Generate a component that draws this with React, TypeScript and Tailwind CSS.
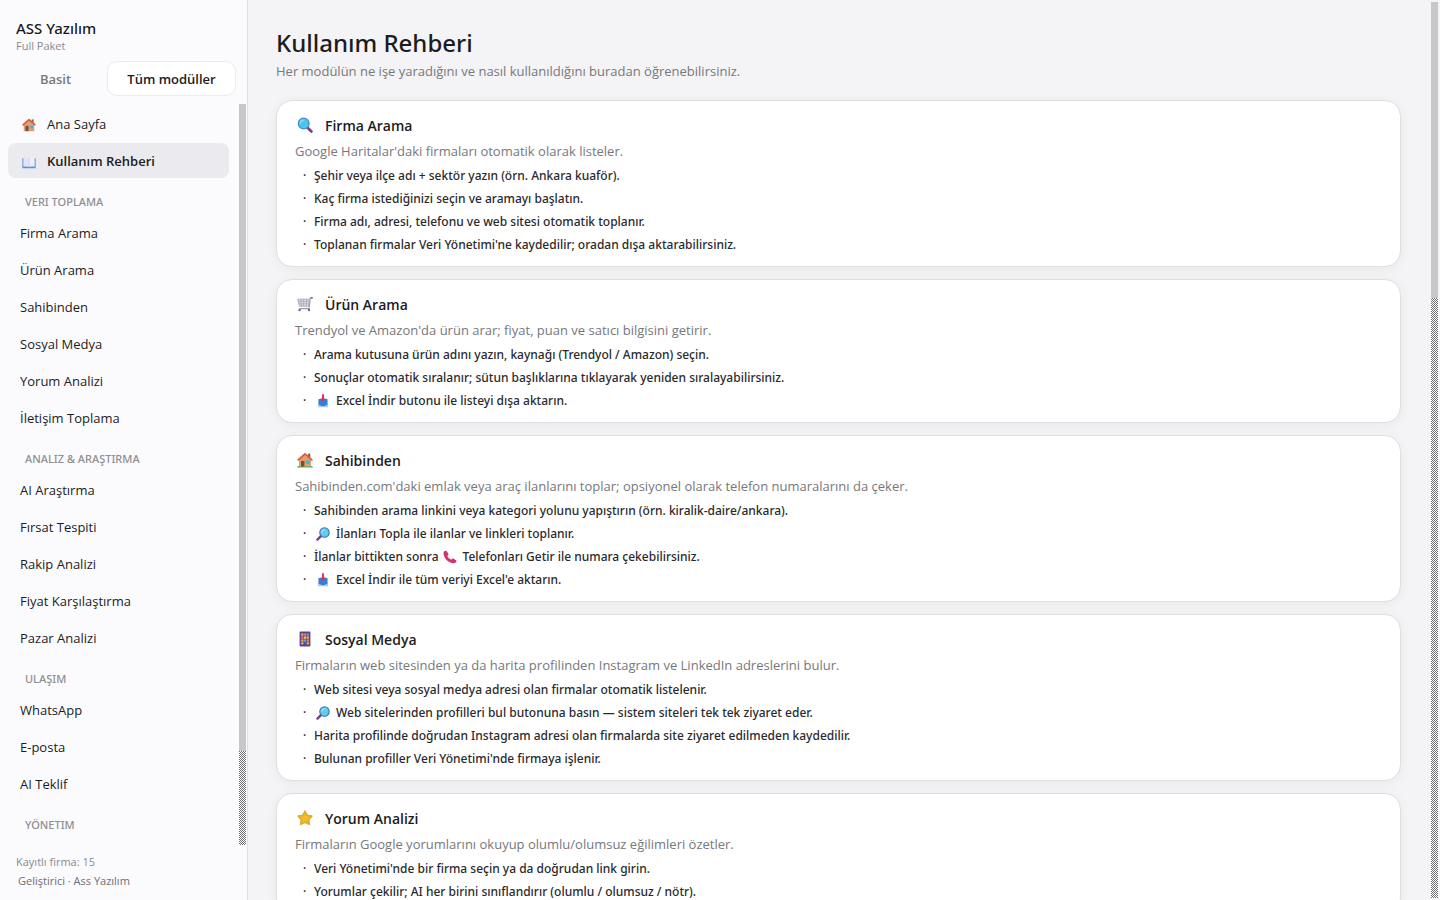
import React, { useState } from 'react';
import clsx from 'clsx';

type IconName = 'search' | 'searchRight' | 'cart' | 'house' | 'garden' | 'phone' | 'star' | 'inbox' | 'call' | 'book';

function Icon({ name, className }: { name: IconName; className?: string }) {
  return (
    <svg viewBox="0 0 16 16" className={clsx('shrink-0', className)} aria-hidden="true">
      {name === 'search' && (
        <>
          <path d="M10.6 10.8l3.8 3.6" stroke="#7b3f86" strokeWidth="2.8" strokeLinecap="round" />
          <circle cx="6.7" cy="6.5" r="5.4" fill="#4fc3ea" stroke="#3a8fd0" strokeWidth="1.2" />
          <path d="M3.4 6.2a3.4 3.4 0 0 1 3-3" stroke="#8be0f8" strokeWidth="1.2" fill="none" strokeLinecap="round" />
        </>
      )}
      {name === 'searchRight' && (
        <>
          <path d="M5.6 10.4l-3.9 3.9" stroke="#7b3f86" strokeWidth="2.8" strokeLinecap="round" />
          <circle cx="9.7" cy="6.3" r="5.4" fill="#5fcdee" stroke="#3f6fae" strokeWidth="1.2" />
          <path d="M6.6 6a3.4 3.4 0 0 1 3-3" stroke="#9be6f8" strokeWidth="1.2" fill="none" strokeLinecap="round" />
        </>
      )}
      {name === 'cart' && (
        <>
          <path d="M.8 3.2h11.6l-.8 7H2.4z" fill="#e6e3ec" stroke="#a8a3b4" strokeWidth="0.9" />
          <path d="M3.8 3.2l.6 7M6.7 3.2v7M9.6 3.2l-.3 7M1.2 5.4h11M1.8 7.8h10" stroke="#a8a3b4" strokeWidth="0.8" />
          <path d="M15 1.8h-1.6L12 12.6H2.6" stroke="#9d98ab" strokeWidth="1.1" fill="none" />
          <path d="M13.6 1h2.2v1.6h-2.2z" fill="#3f7fd0" />
          <circle cx="2.6" cy="14" r="1.2" fill="#3f6fc0" />
          <circle cx="12" cy="14" r="1.2" fill="#3f6fc0" />
        </>
      )}
      {(name === 'house' || name === 'garden') && (
        <>
          <path d="M11 1.6h2.3v4H11z" fill="#9b5b49" />
          <path d="M2 7.2L8 2.2l6 5V15H2z" fill="#dfa06f" />
          <path d="M4 9h3.4v6H4z" fill="#7e4a3e" />
          <path d="M9.3 8.6h3.2v3.2H9.3z" fill="#35b4ec" />
          <path d="M1.2 7.8L8 1.8l6.8 6" stroke="#df5a3c" strokeWidth="1.8" fill="none" strokeLinejoin="round" strokeLinecap="round" />
          {name === 'garden' && <path d="M0 15.6c0-1.6 2-2 3-1.1h10c1-.9 3-.5 3 1.1z" fill="#3fb56a" />}
        </>
      )}
      {name === 'phone' && (
        <>
          <rect x="2.6" y="0.4" width="10.8" height="15.2" rx="1" fill="#57448c" />
          <path d="M4 2h8v11.4H4z" fill="#6d4a8e" />
          <path d="M4.2 2.6h2.2v2.2H4.2zM9.8 5.6H12v2.2H9.8zM4.2 8.6h2.2v2.2H4.2z" fill="#f5a73b" />
          <path d="M7 2.6h2.2v2.2H7zM4.2 5.6h2.2v2.2H4.2zM9.8 8.6H12v2.2H9.8z" fill="#ee7a45" />
          <path d="M9.8 2.6H12v2.2H9.8zM7 8.6h2.2v2.2H7z" fill="#3fa9e8" />
          <path d="M7 5.6h2.2v2.2H7zM4.2 11.6h2.2v1.6H4.2zM9.8 11.6H12v1.6H9.8z" fill="#f0c64b" />
        </>
      )}
      {name === 'star' && (
        <path
          d="M8 1.3l2.1 4 4.6.8-3.2 3.5.7 4.6L8 12.3l-4.2 1.9.7-4.6L1.3 6.1l4.6-.8z"
          fill="#efbf2c"
          stroke="#dfac2c"
          strokeWidth="1.8"
          strokeLinejoin="round"
        />
      )}
      {name === 'inbox' && (
        <>
          <path d="M2.2 6.4h11.6V15H2.2z" fill="#d3d0e6" />
          <path d="M3 5.8h10v6.4l-1.4 1.4H4.4L3 12.2z" fill="#2f80d8" />
          <path d="M2.2 12.6h2.6l.8 1h4.8l.8-1h2.6V15H2.2z" fill="#b4c6e6" />
          <path d="M6.9.4h2.2v4.8h2.1L8 9 4.8 5.2h2.1z" fill="#d8325c" />
        </>
      )}
      {name === 'call' && (
        <path
          d="M.6 3.2C.8 1.4 2.6.2 4 1l2.2 3.4c.4 1-.8 1.8-1.2 2.4.8 1.8 2.6 3.4 4.4 4.2.6-.6 1.5-1.6 2.4-1.2l3.4 2.2c.6 1.4-1 3-2.8 3.2C6.6 15.4.2 9.2.6 3.2z"
          fill="#d8326a"
        />
      )}
      {name === 'book' && (
        <>
          <path d="M.4 3.6h1.4V13h12.4V3.6h1.4v11.6H.4z" fill="#5596dc" />
          <path d="M1.8 2.2C4 1.6 6.6 1.8 8 2.8v10.6c-1.6-.8-4-.9-6.2-.4z" fill="#e6e3f4" />
          <path d="M14.2 2.2C12 1.6 9.4 1.8 8 2.8v10.6c1.6-.8 4-.9 6.2-.4z" fill="#efecf8" />
          <path d="M8 2.8v10.6" stroke="#cfc9e6" strokeWidth="0.8" />
        </>
      )}
    </svg>
  );
}

const sections = [
  {
    title: 'VERI TOPLAMA',
    items: ['Firma Arama', 'Ürün Arama', 'Sahibinden', 'Sosyal Medya', 'Yorum Analizi', 'İletişim Toplama'],
  },
  {
    title: 'ANALIZ & ARAŞTIRMA',
    items: ['AI Araştırma', 'Fırsat Tespiti', 'Rakip Analizi', 'Fiyat Karşılaştırma', 'Pazar Analizi'],
  },
  { title: 'ULAŞIM', items: ['WhatsApp', 'E-posta', 'AI Teklif'] },
  { title: 'YÖNETIM', items: [] },
];

interface Step {
  before?: string;
  icon?: IconName;
  text: string;
}

interface Guide {
  icon: IconName;
  title: string;
  desc: string;
  steps: Step[];
}

const guides: Guide[] = [
  {
    icon: 'search',
    title: 'Firma Arama',
    desc: "Google Haritalar'daki firmaları otomatik olarak listeler.",
    steps: [
      { text: 'Şehir veya ilçe adı + sektör yazın (örn. Ankara kuaför).' },
      { text: 'Kaç firma istediğinizi seçin ve aramayı başlatın.' },
      { text: 'Firma adı, adresi, telefonu ve web sitesi otomatik toplanır.' },
      { text: "Toplanan firmalar Veri Yönetimi'ne kaydedilir; oradan dışa aktarabilirsiniz." },
    ],
  },
  {
    icon: 'cart',
    title: 'Ürün Arama',
    desc: "Trendyol ve Amazon'da ürün arar; fiyat, puan ve satıcı bilgisini getirir.",
    steps: [
      { text: 'Arama kutusuna ürün adını yazın, kaynağı (Trendyol / Amazon) seçin.' },
      { text: 'Sonuçlar otomatik sıralanır; sütun başlıklarına tıklayarak yeniden sıralayabilirsiniz.' },
      { icon: 'inbox', text: 'Excel İndir butonu ile listeyi dışa aktarın.' },
    ],
  },
  {
    icon: 'garden',
    title: 'Sahibinden',
    desc: "Sahibinden.com'daki emlak veya araç ilanlarını toplar; opsiyonel olarak telefon numaralarını da çeker.",
    steps: [
      { text: 'Sahibinden arama linkini veya kategori yolunu yapıştırın (örn. kiralik-daire/ankara).' },
      { icon: 'searchRight', text: 'İlanları Topla ile ilanlar ve linkleri toplanır.' },
      { before: 'İlanlar bittikten sonra', icon: 'call', text: 'Telefonları Getir ile numara çekebilirsiniz.' },
      { icon: 'inbox', text: "Excel İndir ile tüm veriyi Excel'e aktarın." },
    ],
  },
  {
    icon: 'phone',
    title: 'Sosyal Medya',
    desc: 'Firmaların web sitesinden ya da harita profilinden Instagram ve LinkedIn adreslerini bulur.',
    steps: [
      { text: 'Web sitesi veya sosyal medya adresi olan firmalar otomatik listelenir.' },
      { icon: 'searchRight', text: 'Web sitelerinden profilleri bul butonuna basın — sistem siteleri tek tek ziyaret eder.' },
      { text: 'Harita profilinde doğrudan Instagram adresi olan firmalarda site ziyaret edilmeden kaydedilir.' },
      { text: "Bulunan profiller Veri Yönetimi'nde firmaya işlenir." },
    ],
  },
  {
    icon: 'star',
    title: 'Yorum Analizi',
    desc: 'Firmaların Google yorumlarını okuyup olumlu/olumsuz eğilimleri özetler.',
    steps: [
      { text: "Veri Yönetimi'nde bir firma seçin ya da doğrudan link girin." },
      { text: 'Yorumlar çekilir; AI her birini sınıflandırır (olumlu / olumsuz / nötr).' },
    ],
  },
];

// Solid thumb on a dithered track
function ScrollTrack({ thumb, className }: { thumb: string; className?: string }) {
  return (
    <div
      className={clsx(
        'w-[7px] shrink-0 bg-[conic-gradient(#6f6f6f_25%,#fcfcfc_0_50%,#6f6f6f_0_75%,#fcfcfc_0)] bg-[length:2px_2px]',
        className,
      )}
    >
      <div className="w-full bg-[#c7c6cb]" style={{ height: thumb }} />
    </div>
  );
}

function GuideCard({ guide }: { guide: Guide }) {
  return (
    <section className="rounded-2xl border border-[#dfdfe2] bg-white px-[18px] pt-3 pb-[10px] shadow-[0_2px_12px_rgba(0,0,0,0.05)]">
      <h2 className="flex h-6 items-center gap-3 pl-0.5 text-[14px] font-semibold">
        <Icon name={guide.icon} className="size-4" />
        {guide.title}
      </h2>
      <p className="mt-1 text-[13px] leading-5 text-[#77777c]">{guide.desc}</p>
      <ul className="mt-[3px] pl-2 font-['Noto_Sans','Open_Sans',sans-serif] text-[12px] leading-[23px] font-medium text-[#2a2a2d]">
        {guide.steps.map((s) => (
          <li key={s.text} className="flex items-center">
            <span className="w-[11px]">·</span>
            {s.before && <span className="mr-0.5">{s.before}</span>}
            {s.icon && <Icon name={s.icon} className="mr-1.5 ml-0.5 size-3.5" />}
            <span>{s.text}</span>
          </li>
        ))}
      </ul>
    </section>
  );
}

export default function App() {
  const [mode, setMode] = useState('all');
  const [page, setPage] = useState('Kullanım Rehberi');

  const home: { label: string; icon: IconName }[] = [
    { label: 'Ana Sayfa', icon: 'house' },
    { label: 'Kullanım Rehberi', icon: 'book' },
  ];

  return (
    <div className="flex h-screen overflow-hidden bg-[#f4f4f6] font-['Open_Sans','Noto_Sans',sans-serif] text-[#1c1c1e]">
      {/* Sidebar */}
      <aside className="flex w-[248px] shrink-0 flex-col border-r border-[#e0e0e3] bg-[#fbfbfd]">
        <div className="px-4 pt-[18px]">
          <div className="font-['Noto_Sans','Open_Sans',sans-serif] text-[15px] leading-5 font-medium">ASS Yazılım</div>
          <div className="text-[11px] leading-4 text-[#8a8a8f]">Full Paket</div>
        </div>

        <div className="mt-[7px] mr-[11px] ml-2 flex gap-1">
          <button
            onClick={() => setMode('simple')}
            className={clsx(
              'h-[35px] flex-1 rounded-[10px] border pt-0.5 text-[13px] font-semibold',
              mode === 'simple' ? 'border-[#ececf0] bg-white' : 'border-transparent text-[#77777c]',
            )}
          >
            Basit
          </button>
          <button
            onClick={() => setMode('all')}
            className={clsx(
              'h-[35px] w-[129px] rounded-[10px] border pt-0.5 text-[13px] font-semibold',
              mode === 'all' ? 'border-[#ececf0] bg-white' : 'border-transparent text-[#77777c]',
            )}
          >
            Tüm modüller
          </button>
        </div>

        <div className="mt-2 flex min-h-0 flex-1 pr-px">
          <nav className="flex-1 overflow-hidden pt-0.5 pr-[10px] pl-2 text-[13px]">
            {home.map((h) => (
              <button
                key={h.label}
                onClick={() => setPage(h.label)}
                className={clsx(
                  'mb-0.5 flex h-[35px] w-full items-center gap-[11px] rounded-lg pt-0.5 pl-3.5 text-left',
                  page === h.label && 'bg-[#ebebef] font-semibold',
                )}
              >
                <Icon name={h.icon} className="size-3.5" />
                {h.label}
              </button>
            ))}
            {sections.map((s) => (
              <div key={s.title}>
                <div className="h-[35px] pt-2.5 pl-[17px] font-['Noto_Sans','Open_Sans',sans-serif] text-[11px] leading-6 font-medium text-[#8e8e93]">
                  {s.title}
                </div>
                {s.items.map((item) => (
                  <button
                    key={item}
                    onClick={() => setPage(item)}
                    className={clsx(
                      'mb-0.5 flex h-[35px] w-full items-center rounded-lg pt-0.5 pl-3 text-left',
                      page === item && 'bg-[#ebebef] font-semibold',
                    )}
                  >
                    {item}
                  </button>
                ))}
              </div>
            ))}
          </nav>
          <ScrollTrack thumb="87.3%" />
        </div>

        <div className="px-4 pt-[7px] pb-[10px] text-[11px]">
          <div className="leading-[19px] text-[#8a8a8f]">Kayıtlı firma: 15</div>
          <div className="pl-0.5 leading-[19px] text-[#6e6e73]">Geliştirici · Ass Yazılım</div>
        </div>
      </aside>

      {/* Guide */}
      <main className="flex min-w-0 flex-1 pr-0.5">
        <div className="flex-1 overflow-hidden pt-[23px] pr-[30px] pl-7">
          <h1 className="font-['Noto_Sans','Open_Sans',sans-serif] text-[24px] leading-10 font-medium">
            Kullanım Rehberi
          </h1>
          <p className="-mt-0.5 text-[13px] leading-5 text-[#77777c]">
            Her modülün ne işe yaradığını ve nasıl kullanıldığını buradan öğrenebilirsiniz.
          </p>
          <div className="mt-[19px] flex flex-col gap-3">
            {guides.map((g) => (
              <GuideCard key={g.title} guide={g} />
            ))}
          </div>
        </div>
        <ScrollTrack thumb="33%" className="my-0.5" />
      </main>
    </div>
  );
}
